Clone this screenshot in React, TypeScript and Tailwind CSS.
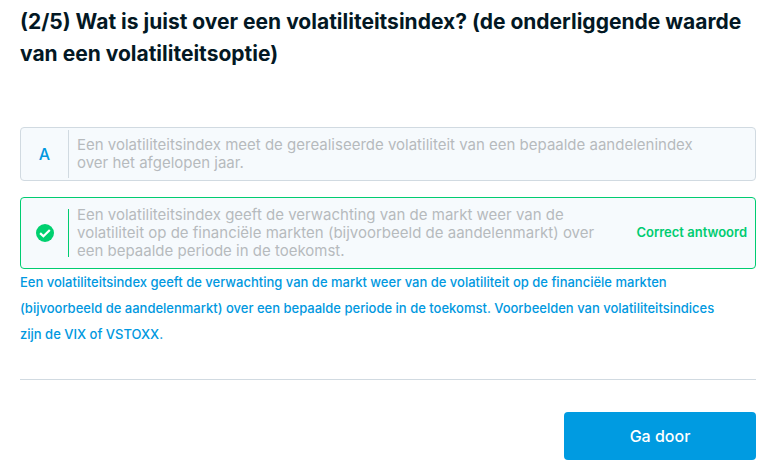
import { useState } from "react";

interface Option {
  letter: string;
  text: string;
  correct: boolean;
}

const options: Option[] = [
  {
    letter: "A",
    text: "Een volatiliteitsindex meet de gerealiseerde volatiliteit van een bepaalde aandelenindex over het afgelopen jaar.",
    correct: false,
  },
  {
    letter: "B",
    text: "Een volatiliteitsindex geeft de verwachting van de markt weer van de volatiliteit op de financiële markten (bijvoorbeeld de aandelenmarkt) over een bepaalde periode in de toekomst.",
    correct: true,
  },
];

function CheckIcon() {
  return (
    <svg viewBox="0 0 18 18" className="size-[18px]" aria-hidden="true">
      <circle cx="9" cy="9" r="9" fill="#00d06f" />
      <path
        d="M4.1 9.1l3.3 3.1 6.4-6.2"
        fill="none"
        stroke="#fff"
        strokeWidth="2.2"
      />
    </svg>
  );
}

export default function App() {
  const [answered] = useState(true);

  return (
    <main className="pt-[6px] pr-[9px] pb-1 pl-5 bg-white font-['Inter',sans-serif]">
      <h1 className="mb-[57px] text-[21px] leading-8 font-bold text-[#031824]">
        (2/5) Wat is juist over een volatiliteitsindex? (de onderliggende waarde
        van een volatiliteitsoptie)
      </h1>

      <div className="flex flex-col gap-4">
        {options.map((o) => (
          <button
            key={o.letter}
            type="button"
            disabled={answered}
            className={`flex w-full items-center rounded border bg-[#f6fafd] text-left ${
              o.correct
                ? "border-[#00cc71] py-2 pr-2"
                : "border-[#d1dae1] py-[2px] pr-8"
            }`}
          >
            <span
              className={`flex h-12 w-12 shrink-0 items-center justify-center border-r text-base font-medium text-[#0098e0] ${
                o.correct ? "border-[#00cc71]" : "border-[#d1dae1]"
              }`}
            >
              {o.correct ? <CheckIcon /> : o.letter}
            </span>
            <span className="flex-1 pl-2 text-[15px] leading-[18px] text-[#b6babd]">
              {o.text}
            </span>
            {o.correct && (
              <span className="ml-5 shrink-0 text-[13px] font-semibold text-[#00cc71]">
                Correct antwoord
              </span>
            )}
          </button>
        ))}
      </div>

      <p className="pr-6 text-[13px] leading-[26px] font-medium text-[#0098e0]">
        Een volatiliteitsindex geeft de verwachting van de markt weer van de
        volatiliteit op de financiële markten (bijvoorbeeld de aandelenmarkt)
        over een bepaalde periode in de toekomst. Voorbeelden van
        volatiliteitsindices zijn de VIX of VSTOXX.
      </p>

      <hr className="mt-8 mb-8 border-[#d1dae1]" />

      <div className="flex justify-end">
        <button
          type="button"
          className="h-12 w-48 rounded bg-[#009be1] text-base font-medium text-white"
        >
          Ga door
        </button>
      </div>
    </main>
  );
}
